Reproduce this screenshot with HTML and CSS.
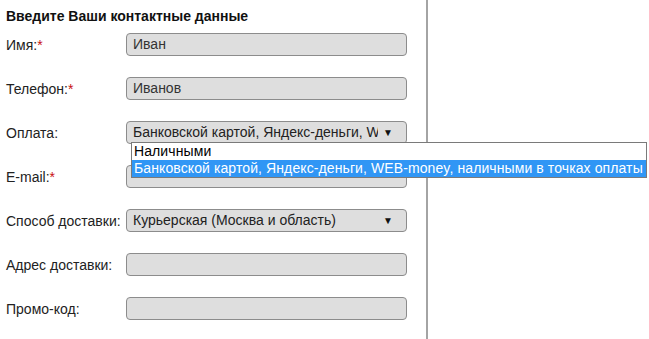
FILE: index.html
```html
<!DOCTYPE html>
<html lang="ru">
<head>
  <meta charset="UTF-8">
  <title>Контактные данные</title>
  <link rel="stylesheet" href="styles.css">
</head>
<body>
  <div class="page">
    <form class="contact-form">
      <h3>Введите Ваши контактные данные</h3>

      <div class="rows">
        <label>Имя:<span class="req">*</span></label>
        <div class="field">Иван</div>

        <label>Телефон:<span class="req">*</span></label>
        <div class="field">Иванов</div>

        <label>Оплата:</label>
        <div class="field select open">
          <span class="value">Банковской картой, Яндекс-деньги, WEB-money, наличными в точках оплаты</span>
          <span class="arrow">&#9660;</span>
          <ul class="options">
            <li>Наличными</li>
            <li class="selected">Банковской картой, Яндекс-деньги, WEB-money, наличными в точках оплаты</li>
          </ul>
        </div>

        <label>E-mail:<span class="req">*</span></label>
        <div class="field"></div>

        <label>Способ доставки:</label>
        <div class="field select">
          <span class="value">Курьерская (Москва и область)</span>
          <span class="arrow">&#9660;</span>
        </div>

        <label>Адрес доставки:</label>
        <div class="field"></div>

        <label>Промо-код:</label>
        <div class="field"></div>
      </div>
    </form>
  </div>
</body>
</html>
```

FILE: styles.css
```css
body {
  margin: 0;
  background: #fff;
  font-family: "Liberation Sans", Arial, sans-serif;
  color: #222;
}

.page {
  height: 339px;
  overflow: hidden;
}

.contact-form {
  box-sizing: border-box;
  width: 428px;
  height: 339px;
  padding: 8px 0 0 6px;
  border-right: 2px solid #a4a4a4;
}

h3 {
  margin: 0 0 9px;
  font-size: 14px;
  line-height: 16px;
  font-weight: bold;
  color: #111;
}

.rows {
  display: grid;
  grid-template-columns: 120px 281px;
  grid-auto-rows: 23px;
  row-gap: 21px;
  align-items: center;
}

label {
  font-size: 14px;
  color: #222;
}

.req {
  color: #c81010;
}

.field {
  box-sizing: border-box;
  height: 23px;
  padding: 0 6px;
  background: #dedede;
  border: 1px solid #8c8c8c;
  border-radius: 4px;
  font-size: 14px;
  line-height: 21px;
  color: #333;
  position: relative;
}

.select {
  display: flex;
  align-items: center;
  gap: 5px;
  padding-right: 13px;
}

.select .value {
  flex: 1;
  overflow: hidden;
  white-space: nowrap;
  color: #222;
}

.select .arrow {
  font-size: 10px;
  color: #111;
}

.options {
  position: absolute;
  left: 4px;
  top: 20px;
  z-index: 2;
  width: 514px;
  margin: 0;
  padding: 0;
  list-style: none;
  background: #fff;
  border: 1px solid #7a7a7a;
  font-size: 14px;
  line-height: 17px;
  color: #000;
}

.options li {
  padding: 0 2px;
  white-space: nowrap;
  letter-spacing: 0.1px;
}

.options .selected {
  background: #3096f5;
  color: #fff;
}
```
